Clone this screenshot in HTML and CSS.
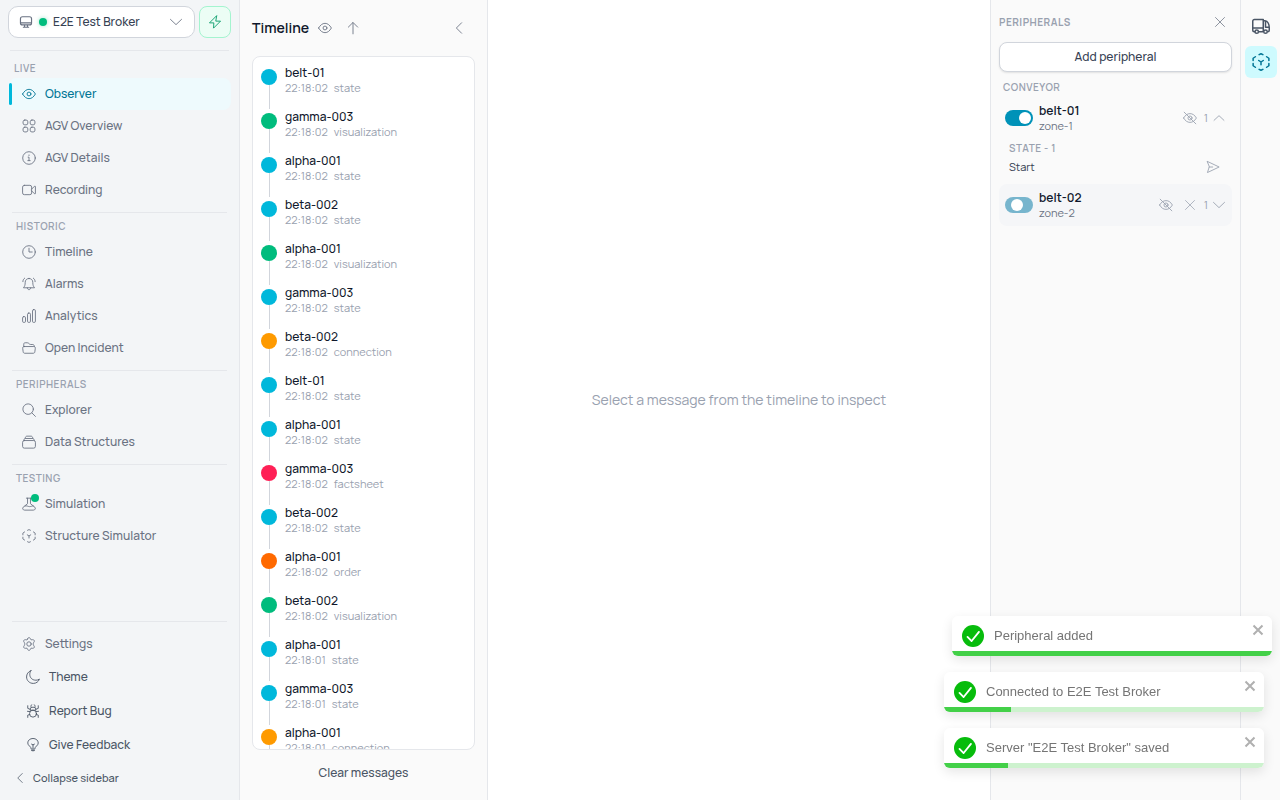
FILE: index.html
```
<!DOCTYPE html>
<html lang="en">
<head>
<meta charset="utf-8">
<meta name="viewport" content="width=device-width, initial-scale=1">
<title>Observer</title>
<link rel="stylesheet" href="styles.css">
</head>
<body>
<svg class="sprite" aria-hidden="true">
  <symbol id="monitor" viewBox="0 0 24 24"><rect x="2.500" y="3" width="19" height="14" rx="3.500"/><path d="M3 13.500h18M9.500 17.500v3.500M14.500 17.500v3.500M7.500 21h9"/></symbol>
  <symbol id="chev-down" viewBox="0 0 24 24"><path d="M2.500 7.500l9.500 9 9.500-9"/></symbol>
  <symbol id="chev-up" viewBox="0 0 24 24"><path d="M3.500 16l8.500-8 8.500 8"/></symbol>
  <symbol id="chev-left" viewBox="0 0 24 24"><path d="M16.500 3l-9 9 9 9"/></symbol>
  <symbol id="bolt" viewBox="0 0 24 24"><path d="M14.500 1.500L2.500 13.500h7.500L9.500 22.500 21.500 10.500H14z"/></symbol>
  <symbol id="eye" viewBox="0 0 24 24"><path d="M1 12C4 7 7.500 4 12 4s8 3 11 8c-3 5-6.500 8-11 8S4 17 1 12z"/><circle cx="12" cy="12" r="3.300"/></symbol>
  <symbol id="eye-off" viewBox="0 0 24 24"><path d="M1 12C4 7 7.500 4.500 12 4.500s8 2.500 11 7.500c-3 5-6.500 7.500-11 7.500S4 17 1 12zM2 2l20 20"/><circle cx="12" cy="12" r="3.500"/></symbol>
  <symbol id="grid" viewBox="0 0 24 24"><rect x="1.800" y="1.800" width="8.200" height="8.200" rx="3"/><rect x="14" y="1.800" width="8.200" height="8.200" rx="3"/><rect x="1.800" y="14" width="8.200" height="8.200" rx="3"/><rect x="14" y="14" width="8.200" height="8.200" rx="3"/></symbol>
  <symbol id="info" viewBox="0 0 24 24"><circle cx="12" cy="12" r="10.800"/><path d="M10.500 10.500H12v6M10 16.500h4M12 6.800v1"/></symbol>
  <symbol id="video" viewBox="0 0 24 24"><rect x="1" y="4" width="15.500" height="16" rx="3"/><path d="M16.500 10.500l5-5c.7-.6 1.500-.3 1.500.6v11.800c0 .9-.8 1.200-1.500.6l-5-5"/></symbol>
  <symbol id="clock" viewBox="0 0 24 24"><circle cx="12" cy="12" r="10.800"/><path d="M12 5.500V12h5.500"/></symbol>
  <symbol id="bell" viewBox="0 0 24 24"><path d="M12 2.500c-4 0-6.500 3-6.500 6.500 0 5-1 7-3 9.500h19c-2-2.500-3-4.500-3-9.500 0-3.500-2.500-6.500-6.500-6.500zM9 18.500c0 4.500 6 4.500 6 0M1.500 8c0-2.500 1-4.500 3-6M22.500 8c0-2.500-1-4.500-3-6"/></symbol>
  <symbol id="bars" viewBox="0 0 24 24"><rect x="1" y="13" width="5" height="10" rx="2"/><rect x="9.500" y="7" width="5" height="16" rx="2"/><rect x="18" y="1" width="5" height="22" rx="2"/></symbol>
  <symbol id="folder" viewBox="0 0 24 24"><path d="M3 9.500V5.500C3 3.800 4 3 5.500 3H9c3 0 3 3 6 3h3.500C20.500 6 21 7.500 21 9.500M4 9.500h16c2 0 3 1 2.800 3l-.8 6c-.2 1.700-1.200 2.500-3 2.500H5c-1.800 0-2.800-.8-3-2.500l-.8-6c-.2-2 .8-3 2.800-3z"/></symbol>
  <symbol id="search" viewBox="0 0 24 24"><circle cx="10.500" cy="10.500" r="9"/><path d="M17 17l6 6"/></symbol>
  <symbol id="stack" viewBox="0 0 24 24"><rect x="1" y="9.500" width="22" height="13" rx="3"/><path d="M3 9.500C3 7.500 4 6 6 6h12c2 0 3 1.500 3 3.500M5.500 6c0-2.500 1-4 3-4h7c2 0 3 1.500 3 4"/></symbol>
  <symbol id="flask" viewBox="0 0 24 24"><path d="M7.500 2h9M9.500 2v9.500L2 17.500c-2 2-.5 5 2.500 5h15c3 0 4.500-3 2.500-5l-7.500-6V2M5 15.500c3-1.500 5 1 8 1s4-1.500 6.500-1"/></symbol>
  <symbol id="cube" viewBox="0 0 24 24"><path d="M9.500 2.200L12 1l2.500 1.200M4.500 5L1.500 7v3M19.500 5l3 2v3M1.500 14v3l3 2M22.500 14v3l-3 2M9.500 21.800L12 23l2.500-1.200M9 10l3 2 3-2M12 12v3.500"/></symbol>
  <symbol id="gear" viewBox="0 0 24 24"><path d="M9.500 3.500C10 1.500 11 1 12 1s2 .5 2.500 2.500c.3 1.200 1.300 1.700 2.500 1.300 2-.6 3.200 0 3.800 1s.5 2.300-.9 3.800c-.9 1-.9 3.800 0 4.800 1.400 1.500 1.500 2.800.9 3.800s-1.800 1.600-3.800 1c-1.200-.4-2.200.1-2.500 1.300C14 22.500 13 23 12 23s-2-.5-2.500-2.500c-.3-1.200-1.300-1.700-2.500-1.300-2 .6-3.200 0-3.800-1s-.5-2.300.9-3.800c.9-1 .9-3.800 0-4.800-1.400-1.500-1.500-2.800-.9-3.800s1.800-1.600 3.800-1c1.200.4 2.200-.1 2.500-1.300z"/><circle cx="12" cy="12" r="3.800"/></symbol>
  <symbol id="moon" viewBox="0 0 24 24"><path d="M8.500 1C3.500 3 1 7 1 12c0 6 5 11 11.500 11 5 0 9-3 10.500-7.500-2 1.500-4 2-6 2C10.500 17.500 6.500 13 6.500 7.500c0-2.500.6-4.500 2-6.500z"/></symbol>
  <symbol id="bug" viewBox="0 0 24 24"><circle cx="12" cy="16.500" r="6"/><path d="M7 10c0-3 2-4.500 5-4.500s5 1.500 5 4.500zM8.500 6C8 3 9 1.500 10 1M15.500 6c.5-3-.5-4.500-1.500-5M7 9L3 7.500V3M17 9l4-1.500V3M6.500 13l-4-.5M17.500 13l4-.5M6.500 18L3 19v4M17.500 18l3.500 1v4"/></symbol>
  <symbol id="bulb" viewBox="0 0 24 24"><path d="M9 18.500c0-4.500-6-5-6-10C3 4 7 .8 12 .8S21 4 21 8.500c0 5-6 5.500-6 10zM9.500 21.500h5M11 24.500h2M12 18v-7M9.500 10.500L12 12l2.500-1.500"/></symbol>
  <symbol id="arrow-up" viewBox="0 0 24 24"><path d="M12 22V3M4 10.500L12 2.500l8 8"/></symbol>
  <symbol id="cross" viewBox="0 0 24 24"><path d="M3 3l18 18M21 3L3 21"/></symbol>
  <symbol id="send" viewBox="0 0 24 24"><path d="M2.500 2.500L22.500 12l-20 9.500L5.500 12zM5.500 12h6"/></symbol>
  <symbol id="truck" viewBox="0 0 24 24"><path d="M3.800 19.500H3c-1.200 0-2-.8-2-2V5.500C1 4.200 2 3.300 3.200 3.300H15v16.200H8.800M1 14.500h14M15 5h2.500C21 5 23 10 23 14v3.500c0 1.300-.6 2-2 2M18 5.500v8h5"/><circle cx="6.300" cy="19.500" r="2.300"/><circle cx="18" cy="19.500" r="2.300"/></symbol>
  <symbol id="tick" viewBox="0 0 24 24"><path class="tick-disc" d="M12 0a12 12 0 1 0 0 24 12 12 0 0 0 0-24z"/><path class="tick-mark" d="M6 13l4.500 4.500L18.500 7.500"/></symbol>
</svg>

<div class="app">
  <aside class="sidebar">
    <div class="server-row">
      <label class="broker">
        <svg class="icon"><use href="#monitor"/></svg>
        <span class="online"></span>
        <select aria-label="Server"><option>E2E Test Broker</option></select>
        <svg class="icon"><use href="#chev-down"/></svg>
      </label>
      <button class="connect" aria-label="Connection"><svg class="icon"><use href="#bolt"/></svg></button>
    </div>
    <nav class="nav">
      <section class="group first">
        <h2>LIVE</h2>
        <a class="item active" href="#"><svg class="icon"><use href="#eye"/></svg>Observer</a>
        <a class="item" href="#"><svg class="icon"><use href="#grid"/></svg>AGV Overview</a>
        <a class="item" href="#"><svg class="icon"><use href="#info"/></svg>AGV Details</a>
        <a class="item" href="#"><svg class="icon"><use href="#video"/></svg>Recording</a>
      </section>
      <section class="group">
        <h2>HISTORIC</h2>
        <a class="item" href="#"><svg class="icon"><use href="#clock"/></svg>Timeline</a>
        <a class="item" href="#"><svg class="icon"><use href="#bell"/></svg>Alarms</a>
        <a class="item" href="#"><svg class="icon"><use href="#bars"/></svg>Analytics</a>
        <a class="item" href="#"><svg class="icon"><use href="#folder"/></svg>Open Incident</a>
      </section>
      <section class="group">
        <h2>PERIPHERALS</h2>
        <a class="item" href="#"><svg class="icon"><use href="#search"/></svg>Explorer</a>
        <a class="item" href="#"><svg class="icon"><use href="#stack"/></svg>Data Structures</a>
      </section>
      <section class="group">
        <h2>TESTING</h2>
        <a class="item running" href="#"><svg class="icon"><use href="#flask"/></svg>Simulation</a>
        <a class="item" href="#"><svg class="icon"><use href="#cube"/></svg>Structure Simulator</a>
      </section>
    </nav>
    <div class="footer">
      <a class="item" href="#"><svg class="icon"><use href="#gear"/></svg>Settings</a>
      <button class="action"><svg class="icon"><use href="#moon"/></svg>Theme</button>
      <button class="action"><svg class="icon"><use href="#bug"/></svg>Report Bug</button>
      <button class="action"><svg class="icon"><use href="#bulb"/></svg>Give Feedback</button>
      <button class="collapse"><svg class="icon sm"><use href="#chev-left"/></svg>Collapse sidebar</button>
    </div>
  </aside>

  <section class="timeline">
    <header>
      <h1>Timeline</h1>
      <button class="plain" aria-label="Visibility"><svg class="icon"><use href="#eye"/></svg></button>
      <button class="plain" aria-label="Sort"><svg class="icon"><use href="#arrow-up"/></svg></button>
      <button class="plain last" aria-label="Collapse timeline"><svg class="icon"><use href="#chev-left"/></svg></button>
    </header>
    <ol class="messages">
      <li class="state"><b>belt-01</b><p><time>22:18:02</time>state</p></li>
      <li class="visualization"><b>gamma-003</b><p><time>22:18:02</time>visualization</p></li>
      <li class="state"><b>alpha-001</b><p><time>22:18:02</time>state</p></li>
      <li class="state"><b>beta-002</b><p><time>22:18:02</time>state</p></li>
      <li class="visualization"><b>alpha-001</b><p><time>22:18:02</time>visualization</p></li>
      <li class="state"><b>gamma-003</b><p><time>22:18:02</time>state</p></li>
      <li class="connection"><b>beta-002</b><p><time>22:18:02</time>connection</p></li>
      <li class="state"><b>belt-01</b><p><time>22:18:02</time>state</p></li>
      <li class="state"><b>alpha-001</b><p><time>22:18:02</time>state</p></li>
      <li class="factsheet"><b>gamma-003</b><p><time>22:18:02</time>factsheet</p></li>
      <li class="state"><b>beta-002</b><p><time>22:18:02</time>state</p></li>
      <li class="order"><b>alpha-001</b><p><time>22:18:02</time>order</p></li>
      <li class="visualization"><b>beta-002</b><p><time>22:18:02</time>visualization</p></li>
      <li class="state"><b>alpha-001</b><p><time>22:18:01</time>state</p></li>
      <li class="state"><b>gamma-003</b><p><time>22:18:01</time>state</p></li>
      <li class="connection"><b>alpha-001</b><p><time>22:18:01</time>connection</p></li>
    </ol>
    <button class="clear">Clear messages</button>
  </section>

  <main class="inspect"><p>Select a message from the timeline to inspect</p></main>

  <aside class="peripherals">
    <header>
      <h2>PERIPHERALS</h2>
      <button class="plain" aria-label="Close peripherals"><svg class="icon sm"><use href="#cross"/></svg></button>
    </header>
    <button class="add">Add peripheral</button>
    <h3>CONVEYOR</h3>
    <div class="device">
      <input class="switch" type="checkbox" role="switch" id="belt1" checked>
      <label for="belt1"><b>belt-01</b><span>zone-1</span></label>
      <button class="plain" aria-label="Hide belt-01"><svg class="icon"><use href="#eye-off"/></svg></button>
      <button class="plain count" aria-label="Collapse belt-01">1<svg class="icon"><use href="#chev-up"/></svg></button>
    </div>
    <div class="detail">
      <h4>STATE - 1</h4>
      <div class="command"><span>Start</span><button class="plain" aria-label="Send Start"><svg class="icon"><use href="#send"/></svg></button></div>
    </div>
    <div class="device hover">
      <input class="switch turning" type="checkbox" role="switch" id="belt2">
      <label for="belt2"><b>belt-02</b><span>zone-2</span></label>
      <button class="plain" aria-label="Hide belt-02"><svg class="icon"><use href="#eye-off"/></svg></button>
      <button class="plain" aria-label="Remove belt-02"><svg class="icon sm"><use href="#cross"/></svg></button>
      <button class="plain count" aria-label="Expand belt-02">1<svg class="icon"><use href="#chev-down"/></svg></button>
    </div>
  </aside>

  <div class="rail">
    <button aria-label="Vehicles"><svg class="icon lg"><use href="#truck"/></svg></button>
    <button class="on" aria-label="Peripherals"><svg class="icon lg"><use href="#cube"/></svg></button>
  </div>
</div>

<div class="toasts">
  <div class="toast entering" role="status">
    <svg class="tick"><use href="#tick"/></svg><p>Peripheral added</p>
    <button aria-label="Dismiss"><svg class="icon sm"><use href="#cross"/></svg></button>
    <div class="bar"><div style="width:100%"></div></div>
  </div>
  <div class="toast" role="status">
    <svg class="tick"><use href="#tick"/></svg><p>Connected to E2E Test Broker</p>
    <button aria-label="Dismiss"><svg class="icon sm"><use href="#cross"/></svg></button>
    <div class="bar"><div style="width:21%"></div></div>
  </div>
  <div class="toast" role="status">
    <svg class="tick"><use href="#tick"/></svg><p>Server "E2E Test Broker" saved</p>
    <button aria-label="Dismiss"><svg class="icon sm"><use href="#cross"/></svg></button>
    <div class="bar"><div style="width:20%"></div></div>
  </div>
</div>
</body>
</html>
```

FILE: styles.css
```
* { box-sizing: border-box; }
body, h1, h2, h3, h4, p, ol { margin: 0; padding: 0; }
body {
  font: 12px/16px Manrope, Inter, sans-serif;
  color: #0f172b;
  background: #fff;
}
button, select { font: inherit; color: inherit; background: none; border: 0; padding: 0; cursor: pointer; }
a { color: inherit; text-decoration: none; }
b { font-weight: 500; }
.sprite { display: none; }
.icon { width: 14px; height: 14px; flex: none; display: block; fill: none; stroke: currentColor; stroke-width: 1.5; stroke-linecap: round; stroke-linejoin: round; overflow: visible; }
.icon.sm { width: 12px; height: 12px; }
.icon.lg { width: 18px; height: 18px; stroke-width: 2; }
.plain { display: flex; align-items: center; color: #6a7282; }

.app { display: grid; grid-template-columns: 240px 248px 1fr 250px 40px; height: 100vh; overflow: hidden; }

/* sidebar */
.sidebar { display: flex; flex-direction: column; padding: 6px 8px; background: #f3f5f7; border-right: 1px solid #e5e7eb; color: #6a7282; }
.server-row { display: flex; gap: 4px; padding-bottom: 12px; }
.broker { flex: 1; min-width: 0; display: flex; align-items: center; gap: 6px; height: 32px; padding: 0 11px 0 10px; background: #fff; border: 1px solid #d1d5dc; border-radius: 10px; }
.broker .icon:first-child { stroke-width: 2; }
.online { width: 8px; height: 8px; border-radius: 50%; background: #00bc7d; box-shadow: 0 0 4px #00bc7d66; }
.broker select { flex: 1; min-width: 0; appearance: none; color: #364153; font-weight: 500; outline: 0; }
.connect { width: 32px; height: 32px; display: grid; place-items: center; color: #009966; background: #ecfdf5; border: 1px solid #a4f4cf; border-radius: 8px; }
.nav { flex: 1; min-height: 0; }
.group { padding-bottom: 6px; }
.group h2, .peripherals h2, .peripherals h3, .peripherals h4 { font-size: 10px; line-height: 16px; font-weight: 600; letter-spacing: 0.5px; color: #99a1af; }
.group::before, .footer::before { content: ""; display: block; height: 1px; margin: 0 4px; background: #e5e7eb; }
.group h2 { padding: 5px 8px 2px; }
.group.first::before { margin: 0 2px; }
.group.first h2 { padding: 9px 6px 2px; }
.item { position: relative; display: flex; align-items: center; gap: 9px; height: 32px; padding: 0 14px; border-radius: 8px; font-weight: 500; }
.item.active { color: #007595; background: #eefafd; }
.item.active::before { content: ""; position: absolute; left: 1px; top: 5px; width: 3px; height: 22px; border-radius: 2px; background: #00b8db; }
.item.running::after { content: ""; position: absolute; left: 23px; top: 6px; width: 8px; height: 8px; border-radius: 50%; background: #00bc7d; }
.footer::before { margin-bottom: 6px; }
.action { display: flex; align-items: center; gap: 9px; width: 100%; height: 34px; padding: 0 18px; font-weight: 500; color: #4a5565; }
.collapse { display: flex; align-items: center; gap: 7px; width: 100%; height: 32px; padding: 0 6px; font-size: 11px; font-weight: 500; color: #4a5565; }

/* timeline */
.timeline { display: flex; flex-direction: column; min-height: 0; padding: 0 12px 12px; background: #fafafa; border-right: 1px solid #e5e7eb; }
.timeline header { display: flex; align-items: center; gap: 14px; height: 56px; flex: none; }
.timeline h1 { font-size: 14px; line-height: 20px; font-weight: 600; margin-right: -5px; }
.timeline .last { margin-left: auto; margin-right: 9px; }
.messages { flex: 1; min-height: 0; overflow: hidden; list-style: none; padding: 8px; background: #fff; border: 1px solid #e5e7eb; border-radius: 8px; }
.messages li { position: relative; height: 44px; padding-left: 24px; }
.messages li::before { content: ""; position: absolute; left: 0; top: 4px; width: 16px; height: 16px; border-radius: 50%; background: var(--kind); }
.messages li::after { content: ""; position: absolute; left: 8px; top: 20px; width: 1px; height: 24px; background: #d1d5dc; }
.messages b { display: block; }
.messages p { font-size: 11px; line-height: 14px; color: #99a1af; }
.messages time { margin-right: 6px; }
.state { --kind: #00b8db; }
.visualization { --kind: #00bc7d; }
.connection { --kind: #fe9a00; }
.factsheet { --kind: #ff2056; }
.order { --kind: #ff6900; }
.clear { height: 38px; color: #4a5565; font-weight: 500; padding-top: 8px; }

.inspect { display: grid; place-items: center; color: #99a1af; font-size: 14px; line-height: 20px; }

/* peripherals */
.peripherals { padding: 0 8px; background: #fafafa; border-left: 1px solid #e5e7eb; }
.peripherals header { display: flex; align-items: center; justify-content: space-between; height: 42px; padding: 2px 6px 0 0; }
.peripherals h2 { font-weight: 700; }
.peripherals .add { display: block; width: 100%; height: 30px; background: #fff; border: 1px solid #d1d5dc; border-radius: 8px; font-weight: 500; color: #364153; box-shadow: 0 1px 2px #0000001a; }
.peripherals h3 { padding: 7px 4px 2px; }
.device { display: flex; align-items: center; gap: 4px; height: 42px; padding: 0 6px; border-radius: 8px; }
.device.hover { background: #f5f6f8; }
.device label { flex: 1; padding-left: 2px; }
.device b { display: block; font-weight: 600; }
.device span { display: block; font-size: 11px; line-height: 14px; color: #6a7282; }
.device .plain { width: 20px; justify-content: center; color: #99a1af; }
.device .count { width: auto; gap: 4px; font-size: 11px; }
.switch { appearance: none; flex: none; width: 28px; height: 16px; margin: 0; padding: 2px; border-radius: 8px; background: #0092b8; }
.switch::before { content: ""; display: block; width: 12px; height: 12px; border-radius: 50%; background: #fff; margin-left: 12px; }
.switch.turning { background: #77b5cd; }
.switch.turning::before { margin-left: 4px; }
.detail { padding: 1px 12px 7px 10px; }
.command { display: flex; justify-content: space-between; align-items: center; height: 21px; font-size: 11px; color: #364153; }
.command .plain { color: #99a1af; }

/* tool rail */
.rail { display: flex; flex-direction: column; align-items: center; gap: 4px; padding-top: 10px; background: #fafafa; border-left: 1px solid #e5e7eb; }
.rail button { width: 32px; height: 32px; display: grid; place-items: center; border-radius: 6px; color: #4a5565; }
.rail .on { color: #007595; background: #cefafe; }

/* notifications */
.toasts { position: fixed; right: 16px; bottom: 32px; width: 320px; display: flex; flex-direction: column; gap: 16px; }
.toast { display: grid; grid-template-columns: 22px 1fr 12px; column-gap: 10px; align-items: center; height: 40px; padding: 0 8px 0 10px; background: #fff; border-radius: 6px; overflow: hidden; grid-template-rows: 35px 5px; box-shadow: 0 4px 12px #0000001a; color: #757575; font: 13px/16px "Liberation Sans", Arial, sans-serif; }
.toast.entering { margin: 0 -8px 0 8px; }
.toast p { padding-top: 4px; }
.toast button { align-self: start; margin-top: 8px; color: #b0b0b0; }
.toast .icon { stroke-width: 4; stroke-linecap: butt; }
.tick { width: 22px; height: 22px; margin-top: 5px; }
.tick-disc { fill: #07bc0c; }
.tick-mark { fill: none; stroke: #fff; stroke-width: 2; stroke-linecap: round; stroke-linejoin: round; }
.bar { grid-column: 1 / -1; margin: 0 -8px 0 -10px; height: 5px; background: #cdf2ce; }
.bar div { height: 5px; background: #43d048; }
```
